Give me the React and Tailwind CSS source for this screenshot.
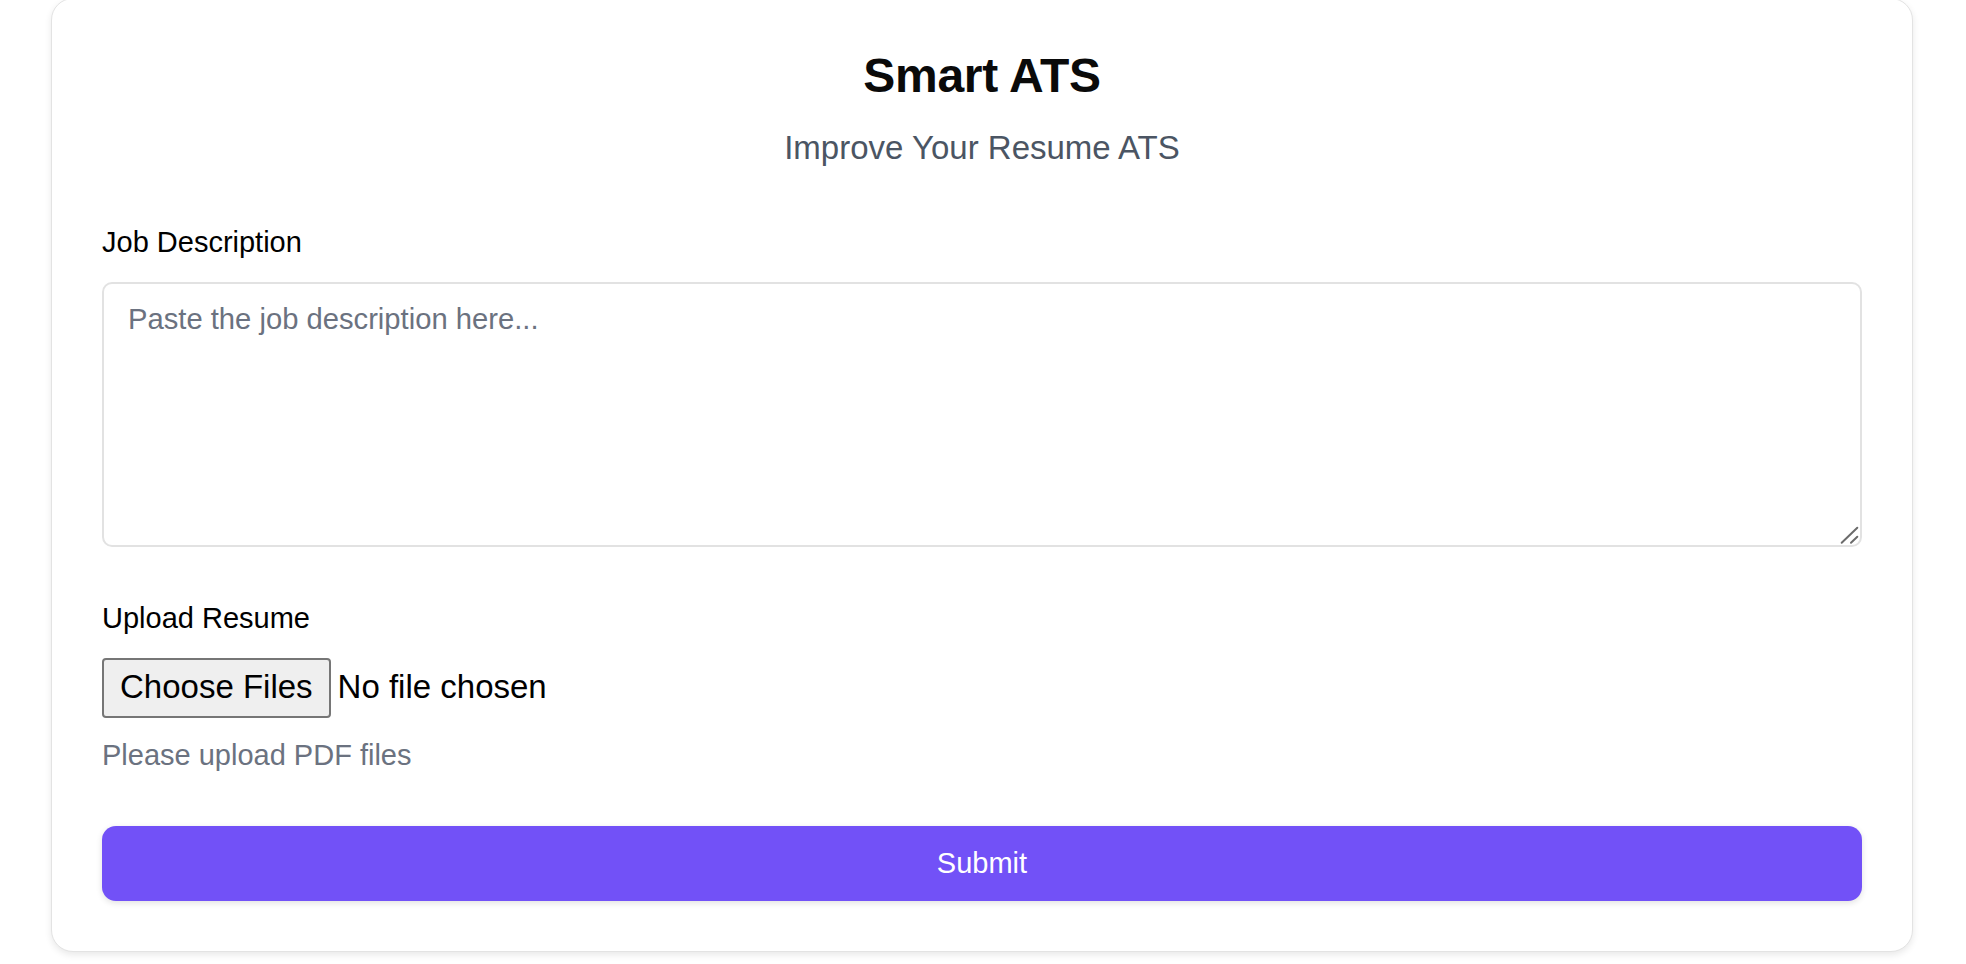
import { useState } from "react";

const SmartAtsPage = () => {
    const [jobDescription, setJobDescription] = useState("");

    return (
        <div className="min-h-screen bg-white" style={{ fontFamily: '"Liberation Sans", Arial, sans-serif' }}>
            <div className="ml-[51px] -mt-[2px] w-[1862px] rounded-[22px] border border-[#e3e3e3] bg-white px-[50px] pt-[51px] pb-[50px] shadow-[0_3px_7px_rgba(0,0,0,0.09)]">
                {/* Header */}
                <h1 className="text-center text-[48px] font-bold leading-[52px] tracking-[-0.3px] text-[#0a0a0a]">Smart ATS</h1>
                <p className="mt-[27px] text-center text-[33px] leading-[37px] text-[#4b5563]">Improve Your Resume ATS</p>

                {/* Job description */}
                <label htmlFor="jd" className="mt-[60px] block text-[29px] leading-[33px] text-black">Job Description</label>
                <div className="relative mt-[23px] h-[265px]">
                    <textarea
                        id="jd"
                        value={jobDescription}
                        onChange={(e) => setJobDescription(e.target.value)}
                        placeholder="Paste the job description here..."
                        className="block h-full w-full resize-none rounded-[10px] border-2 border-[#e2e2e2] bg-white pl-[24px] pr-[23px] pt-[19px] text-[29.2px] leading-[33px] text-black outline-none placeholder:text-[#6b7280]"
                    />
                    <svg className="pointer-events-none absolute bottom-[2px] right-[2px]" width="20" height="20" viewBox="0 0 20 20">
                        <line x1="1.7" y1="17.7" x2="17.3" y2="2.7" stroke="#6b6b6b" strokeWidth="2" strokeLinecap="round" />
                        <line x1="11" y1="17.7" x2="17.3" y2="11.7" stroke="#6b6b6b" strokeWidth="2" strokeLinecap="round" />
                    </svg>
                </div>

                {/* Resume upload */}
                <label className="mt-[55px] block text-[29px] leading-[33px] text-black">Upload Resume</label>
                <div className="mt-[23px] flex h-[60px] items-center">
                    <span className="flex h-[60px] items-center rounded-[4px] border-2 border-[#767676] bg-[#efefef] px-[16px] pb-[4px] text-[33px] leading-[37px] text-black">Choose Files</span>
                    <span className="ml-[7px] pb-[4px] text-[33px] leading-[37px] text-black">No file chosen</span>
                </div>
                <p className="mt-[21px] text-[29px] leading-[33px] text-[#6b7280]">Please upload PDF files</p>

                <button className="mt-[54px] flex h-[75px] w-full items-center justify-center rounded-[14px] bg-[#7251f7] text-[29px] leading-[33px] text-white shadow-[0_2px_6px_rgba(0,0,0,0.12)]">
                    Submit
                </button>
            </div>
        </div>
    );
};

export default SmartAtsPage;
